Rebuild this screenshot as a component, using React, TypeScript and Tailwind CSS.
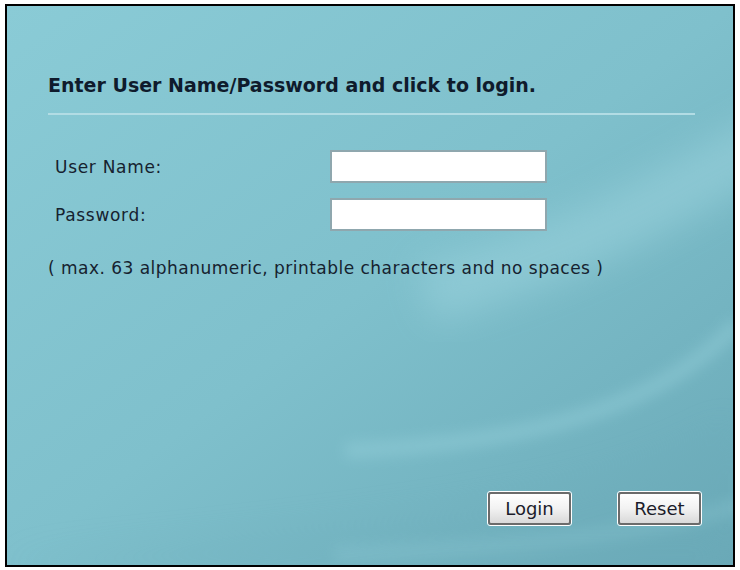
const font = { fontFamily: '"DejaVu Sans", Verdana, Tahoma, sans-serif' };

function Swoosh() {
  return (
    <svg className="absolute inset-0 w-full h-full pointer-events-none" viewBox="0 0 730 563" preserveAspectRatio="none">
      <defs>
        <filter id="soft" x="-30%" y="-30%" width="160%" height="160%">
          <feGaussianBlur stdDeviation="18" />
        </filter>
        <filter id="mid" x="-20%" y="-20%" width="140%" height="140%">
          <feGaussianBlur stdDeviation="7" />
        </filter>
      </defs>
      <path d="M780 130 C 700 170 600 240 420 290" stroke="#a2d8e2" strokeWidth="60" fill="none" opacity="0.45" filter="url(#soft)" />
      <path d="M735 320 C 660 400 540 440 340 448" stroke="#9ad4de" strokeWidth="16" fill="none" opacity="0.4" filter="url(#mid)" />
      <path d="M745 500 C 660 530 520 545 330 552" stroke="#98d2dc" strokeWidth="14" fill="none" opacity="0.3" filter="url(#mid)" />
      <path d="M0 563 L 730 563 L 730 420 C 620 490 420 520 0 560 Z" fill="#6aa9b7" opacity="0.2" filter="url(#soft)" />
    </svg>
  );
}

function Field({ label }: { label: string }) {
  return (
    <div className="flex items-center h-[33px]">
      <span className="w-[282px] pl-[7px] pt-[3px] text-[17px] tracking-[0.7px] text-[#16222f]">{label}</span>
      <input className="w-[217px] h-[33px] bg-white border-2 border-[#8fa7ae] outline-none" />
    </div>
  );
}

function FormButton({ label }: { label: string }) {
  return (
    <button className="w-[85px] h-[35px] border border-white rounded-[3px] p-0">
      <span className="flex items-center justify-center w-full h-full border-2 border-[#6b6b6b] rounded-[3px] bg-gradient-to-b from-white via-[#f2f2f2] to-[#d9d9d9] text-[18px] text-[#1c1c2a]">
        {label}
      </span>
    </button>
  );
}

export default function App() {
  return (
    <div className="w-[740px] h-[570px] bg-white pt-[4px] pl-[5px]" style={font}>
      <div className="relative w-[730px] h-[563px] border-2 border-black overflow-hidden bg-gradient-to-br from-[#8acbd6] via-[#7fc0cc] to-[#6aa9b7]">
        <Swoosh />
        <div className="relative flex flex-col h-full pl-[41px] pr-[38px]">
          <h1 className="mt-[67px] text-[19px] font-bold text-[#0f1b2c] leading-[24px]">
            Enter User Name/Password and click to login.
          </h1>
          <div className="mt-[16px] h-[2px] bg-[#b2dce4]" />
          <div className="mt-[35px] flex flex-col gap-[15px]">
            <Field label="User Name:" />
            <Field label="Password:" />
          </div>
          <p className="mt-[25px] text-[17px] tracking-[0.48px] text-[#16222f]">
            ( max. 63 alphanumeric, printable characters and no spaces )
          </p>
          <div className="mt-auto mb-[39px] flex justify-end gap-[45px] -mr-[7px]">
            <FormButton label="Login" />
            <FormButton label="Reset" />
          </div>
        </div>
      </div>
    </div>
  );
}
